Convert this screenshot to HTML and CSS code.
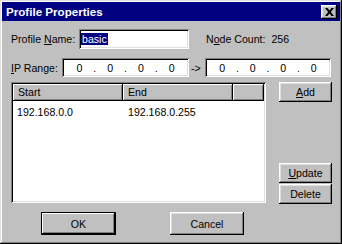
FILE: index.html
```html
<!DOCTYPE html>
<html lang="en">
<head>
    <meta charset="UTF-8">
    <title>Profile Properties</title>
    <link rel="stylesheet" href="styles.css">
</head>
<body>
    <div class="window">
        <div class="titlebar">
            <span class="title">Profile Properties</span>
            <span class="close">
                <svg width="9" height="8" viewBox="0 0 9 8"><path d="M0 0h2.5l2 2.4 2-2.4H9L5.8 4 9 8H6.5l-2-2.4-2 2.4H0l3.2-4z" fill="#000"/></svg>
            </span>
        </div>
        <div class="content">
            <div class="row row-name">
                <span class="label name-label">Profile <u>N</u>ame:</span>
                <div class="field name-field"><span class="selected">basic</span></div>
                <span class="node">N<u>o</u>de Count:&nbsp; 256</span>
            </div>
            <div class="row row-ip">
                <span class="label ip-label"><u>I</u>P Range:</span>
                <div class="field ip ip-from">
                    <span class="seg">0</span><span class="dot">.</span>
                    <span class="seg">0</span><span class="dot">.</span>
                    <span class="seg">0</span><span class="dot">.</span>
                    <span class="seg">0</span>
                </div>
                <span class="arrow">-&gt;</span>
                <div class="field ip ip-to">
                    <span class="seg">0</span><span class="dot">.</span>
                    <span class="seg">0</span><span class="dot">.</span>
                    <span class="seg">0</span><span class="dot">.</span>
                    <span class="seg">0</span>
                </div>
            </div>
            <div class="main">
                <div class="list">
                    <div class="list-head">
                        <span class="col col-start">Start</span>
                        <span class="col col-end">End</span>
                        <span class="col col-rest"></span>
                    </div>
                    <div class="list-row">
                        <span class="cell col-start">192.168.0.0</span>
                        <span class="cell col-end">192.168.0.255</span>
                    </div>
                </div>
                <div class="side">
                    <button class="btn"><u>A</u>dd</button>
                    <button class="btn btn-update"><u>U</u>pdate</button>
                    <button class="btn">Delete</button>
                </div>
            </div>
            <div class="bottom">
                <button class="btn btn-ok">OK</button>
                <button class="btn btn-cancel">Cancel</button>
            </div>
        </div>
    </div>
</body>
</html>
```

FILE: styles.css
```css
body { margin: 0; font-family: "Liberation Sans", Arial, sans-serif; font-size: 10.6px; color: #000; }
u { text-underline-offset: 1px; }
.window { width: 342px; height: 244px; box-sizing: border-box; padding: 2px; background: #c0c0c0; box-shadow: inset -1px -1px #000, inset 1px 1px #dfdfdf, inset -2px -2px #808080, inset 2px 2px #fff; }
.titlebar { height: 19px; background: #000080; color: #fff; display: flex; align-items: center; justify-content: space-between; padding: 0 3px 0 4px; }
.title { font-weight: bold; font-size: 11.6px; }
.close { width: 16px; height: 14px; box-sizing: border-box; background: #c0c0c0; display: flex; align-items: center; justify-content: center; box-shadow: inset -1px -1px #000, inset 1px 1px #fff, inset -2px -2px #808080, inset 2px 2px #dfdfdf; }
.content { padding: 8px 0 0 9px; }
.row { display: flex; align-items: center; }
.row-name { height: 20px; }
.row-ip { height: 19px; margin-top: 9px; }
.field { background: #fff; box-sizing: border-box; height: 100%; box-shadow: inset 1px 1px #808080, inset -1px -1px #fff, inset 2px 2px #000, inset -2px -2px #dfdfdf; }
.name-label { width: 68px; }
.name-field { width: 110px; padding: 3px 0 0 2px; line-height: 14px; }
.selected { background: #000080; color: #fff; padding: 0 1px; }
.node { margin-left: 17px; }
.ip-label { width: 51px; }
.ip { display: flex; align-items: center; padding: 0 4px; }
.ip-from { width: 127px; }
.ip-to { width: 126px; }
.seg { flex: 1; text-align: center; }
.dot { width: 4px; text-align: center; }
.arrow { width: 14px; padding-left: 2px; }
.main { display: flex; height: 122px; margin-top: 5px; }
.list { width: 255px; height: 121px; box-sizing: border-box; padding: 2px; background: #fff; box-shadow: inset 1px 1px #808080, inset -1px -1px #fff, inset 2px 2px #000, inset -2px -2px #dfdfdf; }
.list-head { display: flex; height: 17px; }
.col { box-sizing: border-box; height: 17px; line-height: 16px; padding-left: 5px; background: #c0c0c0; box-shadow: inset -1px -1px #000, inset 1px 1px #fff, inset -2px -2px #808080; }
.col-start { width: 110px; }
.col-end { width: 110px; }
.col-rest { width: 31px; }
.list-row { display: flex; margin-top: 4px; line-height: 14px; }
.cell { box-sizing: border-box; padding-left: 4px; }
.cell.col-end { padding-left: 5px; }
.side { display: flex; flex-direction: column; width: 53px; margin-left: 13px; }
.btn { font: inherit; color: #000; border: none; padding: 0; background: #c0c0c0; height: 20px; box-shadow: inset -1px -1px #000, inset 1px 1px #fff, inset -2px -2px #808080, inset 2px 2px #dfdfdf; }
.btn-update { margin-top: auto; margin-bottom: 1px; }
.bottom { display: flex; margin-top: 8px; }
.btn-ok { width: 75px; height: 23px; margin-left: 30px; box-shadow: inset 0 0 0 1px #000, inset -2px -2px #000, inset 2px 2px #fff, inset -3px -3px #808080; }
.btn-cancel { width: 74px; height: 23px; margin-left: 54px; }
```
